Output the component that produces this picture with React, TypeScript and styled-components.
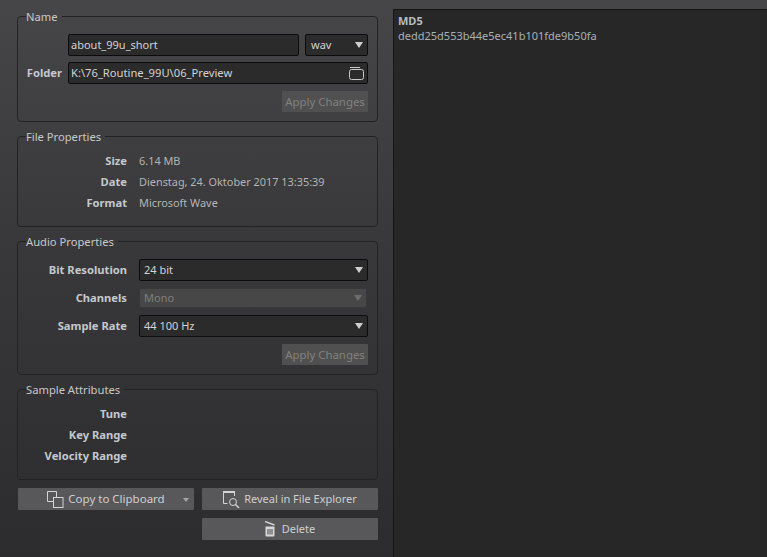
import React from "react";
import styled, { createGlobalStyle } from "styled-components";

const Global = createGlobalStyle`
  html, body { margin: 0; padding: 0; height: 100%; }
  body { width: 767px; height: 557px; overflow: hidden; background: #2e2e30; }
  #root { height: 100%; }
`;

const Page = styled.div`
  width: 767px;
  height: 557px;
  display: grid;
  grid-template-columns: 393px 1fr;
  font-family: "Noto Sans", "Open Sans", sans-serif;
  font-size: 11px;
  color: #c6c6c6;
  background: linear-gradient(180deg, #464648 0%, #38383a 45%, #2c2c2e 100%);
  overflow: hidden;
`;

const LeftColumn = styled.div`
  padding: 8px 15px 0 17px;
  display: flex;
  flex-direction: column;
  min-width: 0;
`;

const Group = styled.fieldset<{ $height: number }>`
  margin: 0 0 6px;
  padding: 0 8px;
  min-width: 0;
  height: ${(p) => p.$height}px;
  box-sizing: border-box;
  border: 1px solid #232325;
  border-radius: 4px;
  display: flex;
  flex-direction: column;
`;

const Legend = styled.legend`
  padding: 2px 4px 0 0;
  font-size: 11.2px;
  line-height: 14px;
  color: #c8c8c8;
`;

const Row = styled.div<{ $h?: number; $mt?: number }>`
  display: flex;
  align-items: center;
  height: ${(p) => p.$h ?? 22}px;
  margin-top: ${(p) => p.$mt ?? 0}px;
`;

const Label = styled.span<{ $w: number; $gap?: number }>`
  width: ${(p) => p.$w}px;
  flex: none;
  margin-right: ${(p) => p.$gap ?? 12}px;
  padding-bottom: 2px;
  text-align: right;
  font-weight: 700;
  font-size: 11.2px;
  color: #c4c8cc;
`;

const Value = styled.span`
  padding-bottom: 2px;
  font-size: 10.9px;
  color: #b4b4b4;
`;

const Field = styled.div<{ $w: number; $gapLeft?: number }>`
  width: ${(p) => p.$w}px;
  flex: none;
  margin-left: ${(p) => p.$gapLeft ?? 0}px;
  height: 22px;
  box-sizing: border-box;
  background: #2b2b2b;
  border: 1px solid #0c0c0c;
  border-radius: 2px;
  display: flex;
  align-items: center;
  padding: 0 3px 0 2px;
  color: #d2d2d2;
`;

const FieldText = styled.span<{ $size?: number; $indent?: number }>`
  flex: 1;
  padding-bottom: 1px;
  padding-left: ${(p) => p.$indent ?? 0}px;
  font-size: ${(p) => p.$size ?? 11}px;
  white-space: nowrap;
`;

const Select = styled.div<{ $disabled?: boolean }>`
  width: ${(p) => (p.$disabled ? 228 : 229)}px;
  height: ${(p) => (p.$disabled ? 20 : 22)}px;
  box-sizing: border-box;
  flex: none;
  display: flex;
  align-items: center;
  padding: 0 3px 0 4px;
  border-radius: 2px;
  border: 1px solid ${(p) => (p.$disabled ? "#38383a" : "#0c0c0c")};
  background: ${(p) => (p.$disabled ? "#474747" : "#2b2b2b")};
  color: ${(p) => (p.$disabled ? "#7e7e7e" : "#d2d2d2")};
`;

const Arrow = styled.i<{ $color?: string; $small?: boolean }>`
  display: block;
  flex: none;
  width: 0;
  height: 0;
  margin-right: 1px;
  border-left: ${(p) => (p.$small ? 3.5 : 4)}px solid transparent;
  border-right: ${(p) => (p.$small ? 3.5 : 4)}px solid transparent;
  border-top: ${(p) => (p.$small ? 4 : 6)}px solid ${(p) => p.$color ?? "#d0d0d0"};
`;

const ApplyButton = styled.div`
  align-self: flex-end;
  box-sizing: border-box;
  margin-top: 7px;
  margin-right: 1px;
  width: 86px;
  height: 21px;
  padding-bottom: 1px;
  border-radius: 1px;
  background: #505050;
  color: #818181;
  font-size: 11.4px;
  display: flex;
  align-items: center;
  justify-content: center;
  white-space: nowrap;
`;

const ButtonGrid = styled.div`
  display: grid;
  grid-template-columns: 176px 176px;
  column-gap: 8px;
  row-gap: 8px;
  margin-top: 2px;
  margin-left: 1px;
`;

const ActionButton = styled.div<{ $col?: number; $gap?: number; $size?: number }>`
  ${(p) => (p.$col ? `grid-column:${p.$col};` : "")}
  position: relative;
  box-sizing: border-box;
  height: 22px;
  border-radius: 1px;
  background: #58585a;
  color: #cfcfcf;
  font-size: ${(p) => p.$size ?? 11}px;
  display: flex;
  align-items: center;
  justify-content: center;
  gap: ${(p) => p.$gap ?? 4}px;
  white-space: nowrap;
`;

const ButtonText = styled.span`
  padding-bottom: 2px;
`;

const DropdownMark = styled.span`
  position: absolute;
  right: 4px;
  top: 10px;
`;

const ResultPanel = styled.div`
  margin-top: 9px;
  background: #272727;
  border-top: 1px solid #161616;
  border-left: 1px solid #161616;
  padding: 3px 4px;
  line-height: 15px;
`;

const ResultTitle = styled.div`
  font-weight: 700;
  color: #b8bcc0;
`;

const ResultValue = styled.div`
  color: #a8b0b4;
`;

const FolderIcon = () => (
  <svg width="15" height="13" viewBox="0 0 15 13" fill="none" stroke="#c8c8c8" strokeWidth="1">
    <path d="M1 0.5H11" />
    <rect x="0.5" y="2.5" width="14" height="10" rx="2" />
  </svg>
);

const CopyIcon = () => (
  <svg width="17" height="17" viewBox="0 0 17 17" fill="none" stroke="#d4d4d4" strokeWidth="1">
    <path d="M6 10.5H0.5V0.5H9.5V6" />
    <rect x="6.5" y="6.5" width="9.5" height="10" />
  </svg>
);

const RevealIcon = () => (
  <svg width="17" height="17" viewBox="0 0 17 17" fill="none" stroke="#d4d4d4" strokeWidth="1">
    <path d="M0 1H12" strokeWidth="2" />
    <path d="M0.5 2V12.5H4.5" />
    <path d="M11.5 2V5" />
    <circle cx="10" cy="11" r="3.5" />
    <path d="M12.5 13.5L16 17" strokeWidth="1.4" />
  </svg>
);

const TrashIcon = () => (
  <svg width="10" height="16" viewBox="0 0 10 16" fill="none">
    <path d="M0 0.5L9.5 4" stroke="#d4d4d4" strokeWidth="1.4" />
    <path d="M0.5 5.5H9.5V14.5C9.5 15 9.1 15.5 8.5 15.5H1.5C0.9 15.5 0.5 15 0.5 14.5Z" fill="#d8d8d8" />
    <path d="M3 8V13.5M5 8V13.5M7 8V13.5" stroke="#444" strokeWidth="1" />
  </svg>
);

export default function App() {
  return (
    <Page>
      <Global />
      <LeftColumn>
        <Group $height={114}>
          <Legend>Name</Legend>
          <Row $mt={10}>
            <Label $w={36} $gap={6} />
            <Field $w={231}><FieldText>about_99u_short</FieldText></Field>
            <Field $w={63} $gapLeft={6}>
              <FieldText $indent={3}>wav</FieldText>
              <Arrow />
            </Field>
          </Row>
          <Row $mt={6}>
            <Label $w={36} $gap={6}>Folder</Label>
            <Field $w={300}>
              <FieldText $size={11.2}>K:\76_Routine_99U\06_Preview</FieldText>
              <FolderIcon />
            </Field>
          </Row>
          <ApplyButton>Apply Changes</ApplyButton>
        </Group>
        <Group $height={99}>
          <Legend>File Properties</Legend>
          <Row $mt={7} $h={21}><Label $w={101}>Size</Label><Value>6.14 MB</Value></Row>
          <Row $h={21}><Label $w={101}>Date</Label><Value>Dienstag, 24. Oktober 2017 13:35:39</Value></Row>
          <Row $h={21}><Label $w={101}>Format</Label><Value>Microsoft Wave</Value></Row>
        </Group>
        <Group $height={142}>
          <Legend>Audio Properties</Legend>
          <Row $mt={10}><Label $w={101}>Bit Resolution</Label><Select><FieldText>24 bit</FieldText><Arrow /></Select></Row>
          <Row $mt={7} $h={20}><Label $w={101}>Channels</Label><Select $disabled><FieldText>Mono</FieldText><Arrow $color="#6c6c6c" /></Select></Row>
          <Row $mt={7}><Label $w={101}>Sample Rate</Label><Select><FieldText>44 100 Hz</FieldText><Arrow /></Select></Row>
          <ApplyButton>Apply Changes</ApplyButton>
        </Group>
        <Group $height={99}>
          <Legend>Sample Attributes</Legend>
          <Row $mt={7} $h={21}><Label $w={101}>Tune</Label></Row>
          <Row $h={21}><Label $w={101}>Key Range</Label></Row>
          <Row $h={21}><Label $w={101}>Velocity Range</Label></Row>
        </Group>
        <ButtonGrid>
          <ActionButton $size={11.5}><CopyIcon /><ButtonText>Copy to Clipboard</ButtonText><DropdownMark><Arrow $small $color="#a4a4a4" /></DropdownMark></ActionButton>
          <ActionButton><RevealIcon /><ButtonText>Reveal in File Explorer</ButtonText></ActionButton>
          <ActionButton $col={2} $gap={7}><TrashIcon /><ButtonText>Delete</ButtonText></ActionButton>
        </ButtonGrid>
      </LeftColumn>
      <ResultPanel>
        <ResultTitle>MD5</ResultTitle>
        <ResultValue>dedd25d553b44e5ec41b101fde9b50fa</ResultValue>
      </ResultPanel>
    </Page>
  );
}
